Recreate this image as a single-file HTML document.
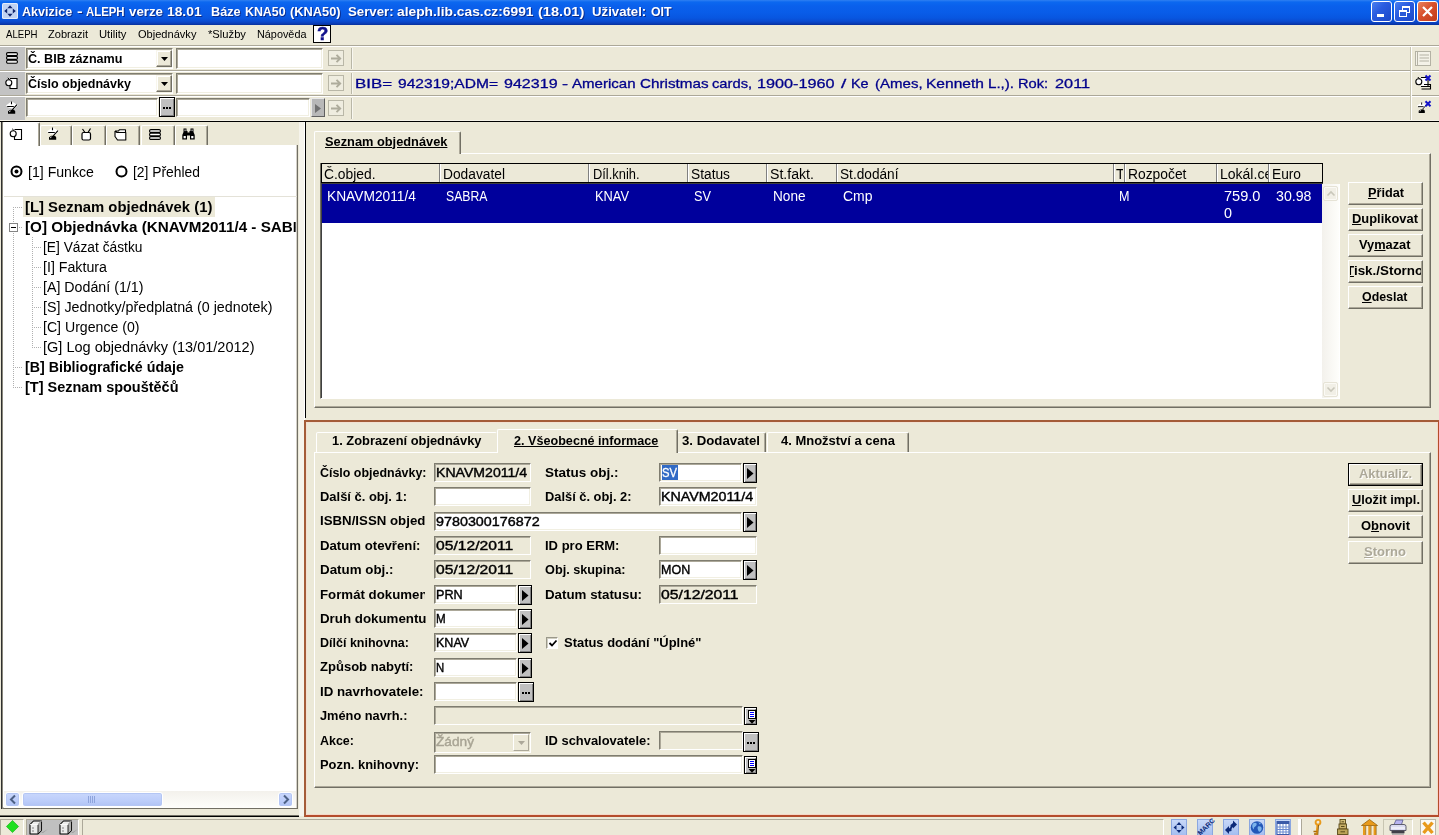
<!DOCTYPE html>
<html>
<head>
<meta charset="utf-8">
<title>Akvizice - ALEPH</title>
<style>
html,body{margin:0;padding:0;}
body{width:1439px;height:835px;overflow:hidden;background:#ece9d8;font-family:"Liberation Sans",sans-serif;font-size:13px;color:#000;position:relative;}
.a{position:absolute;box-sizing:border-box;}
.t{position:absolute;white-space:nowrap;line-height:16px;height:16px;transform:scaleX(1.0005);transform-origin:0 50%;}
#title{left:0;top:0;width:1439px;height:25px;background:linear-gradient(to bottom,#2f80f2 0,#0c68f0 2px,#0a60ec 6px,#095ce8 13px,#0856e0 18px,#0a4cd2 21px,#0a40be 23px,#08309c 25px);}
.cb{position:absolute;top:1px;width:21px;height:21px;border:1px solid #fff;border-radius:3px;box-sizing:border-box;background:linear-gradient(135deg,#4a80f0 0,#2a5ce0 40%,#1c48c8 100%);}
.cb.x{background:linear-gradient(135deg,#e8825c 0,#d8502c 45%,#c03c1c 100%);}
.in{position:absolute;box-sizing:border-box;background:#fff;border:1px solid;border-color:#7f7d70 #fff #fff #7f7d70;box-shadow:inset 1px 1px 0 #aca899, inset -1px -1px 0 #f1efe2;}
.in.ro{background:#ece9d8;box-shadow:inset 1px 1px 0 #aca899;}
.btn{position:absolute;box-sizing:border-box;background:#ece9d8;border:1px solid;border-color:#fff #716f64 #716f64 #fff;box-shadow:inset -1px -1px 0 #aca899;}
.gb{position:absolute;box-sizing:border-box;background:#c0c0c0;border:1px solid;border-color:#fff #404040 #404040 #fff;box-shadow:inset -1px -1px 0 #808080;}
.dd{position:absolute;box-sizing:border-box;background:#ece9d8;border:1px solid;border-color:#f8f6ec #716f64 #716f64 #f8f6ec;box-shadow:inset -1px -1px 0 #aca899, inset 1px 1px 0 #fff;}
svg{position:absolute;overflow:visible;}
</style>
</head>
<body>
<div class="a" id="title">
<svg style="left:2px;top:3px" width="16" height="16" viewBox="0 0 16 16"><rect x="0" y="0" width="16" height="16" rx="1.5" fill="#e4ecfa"/><rect x="1" y="1" width="14" height="14" rx="1" fill="#c0d2f2"/><path d="M8 2.2L10.6 5.2H5.4Z M8 13.8L10.6 10.8H5.4Z M2.2 8L5.2 5.4V10.6Z M13.8 8L10.8 5.4V10.6Z" fill="#10246c"/></svg>
<div class="t" style="left:21.7px;top:4.1px;font-size:13.7px;font-weight:bold;color:#fff;transform:scaleX(0.917);transform-origin:0 50%;text-shadow:1px 1px 0 #0a2a8a;">Akvizice</div>
<div class="t" style="left:77px;top:4.1px;font-size:13.7px;font-weight:bold;color:#fff;transform:scaleX(1.227);transform-origin:0 50%;text-shadow:1px 1px 0 #0a2a8a;">-</div>
<div class="t" style="left:85.7px;top:4.1px;font-size:13.7px;font-weight:bold;color:#fff;transform:scaleX(0.832);transform-origin:0 50%;text-shadow:1px 1px 0 #0a2a8a;">ALEPH</div>
<div class="t" style="left:129px;top:4.1px;font-size:13.7px;font-weight:bold;color:#fff;transform:scaleX(0.971);transform-origin:0 50%;text-shadow:1px 1px 0 #0a2a8a;">verze</div>
<div class="t" style="left:167.4px;top:4.1px;font-size:13.7px;font-weight:bold;color:#fff;transform:scaleX(1.009);transform-origin:0 50%;text-shadow:1px 1px 0 #0a2a8a;">18.01</div>
<div class="t" style="left:211.4px;top:4.1px;font-size:13.7px;font-weight:bold;color:#fff;transform:scaleX(0.926);transform-origin:0 50%;text-shadow:1px 1px 0 #0a2a8a;">Báze</div>
<div class="t" style="left:244.7px;top:4.1px;font-size:13.7px;font-weight:bold;color:#fff;transform:scaleX(0.904);transform-origin:0 50%;text-shadow:1px 1px 0 #0a2a8a;">KNA50</div>
<div class="t" style="left:289.7px;top:4.1px;font-size:13.7px;font-weight:bold;color:#fff;transform:scaleX(0.937);transform-origin:0 50%;text-shadow:1px 1px 0 #0a2a8a;">(KNA50)</div>
<div class="t" style="left:348px;top:4.1px;font-size:13.7px;font-weight:bold;color:#fff;transform:scaleX(0.966);transform-origin:0 50%;text-shadow:1px 1px 0 #0a2a8a;">Server:</div>
<div class="t" style="left:397px;top:4.1px;font-size:13.7px;font-weight:bold;color:#fff;transform:scaleX(1.008);transform-origin:0 50%;text-shadow:1px 1px 0 #0a2a8a;">aleph.lib.cas.cz:6991</div>
<div class="t" style="left:538px;top:4.1px;font-size:13.7px;font-weight:bold;color:#fff;transform:scaleX(1.067);transform-origin:0 50%;text-shadow:1px 1px 0 #0a2a8a;">(18.01)</div>
<div class="t" style="left:592px;top:4.1px;font-size:13.7px;font-weight:bold;color:#fff;transform:scaleX(0.964);transform-origin:0 50%;text-shadow:1px 1px 0 #0a2a8a;">Uživatel:</div>
<div class="t" style="left:651.4px;top:4.1px;font-size:13.7px;font-weight:bold;color:#fff;transform:scaleX(0.903);transform-origin:0 50%;text-shadow:1px 1px 0 #0a2a8a;">OIT</div>
<div class="cb" style="left:1371px"><div class="a" style="left:5px;top:12px;width:7px;height:3px;background:#fff"></div></div>
<div class="cb" style="left:1394px"><div class="a" style="left:7px;top:4px;width:8px;height:7px;border:1px solid #fff;border-top-width:2px"></div><div class="a" style="left:4px;top:8px;width:8px;height:7px;border:1px solid #fff;border-top-width:2px;background:#2a5ad8"></div></div>
<div class="cb x" style="left:1417px"><svg style="left:0;top:0" width="19" height="19" viewBox="0 0 19 19"><path d="M5 5 L14 14 M14 5 L5 14" stroke="#fff" stroke-width="2.2" fill="none"/></svg></div>
</div>
<div class="t" style="left:5.5px;top:25.8px;font-size:11px;transform:scaleX(0.873);transform-origin:0 50%;">ALEPH</div>
<div class="t" style="left:48px;top:25.8px;font-size:11px;transform:scaleX(1.006);transform-origin:0 50%;">Zobrazit</div>
<div class="t" style="left:99px;top:25.8px;font-size:11px;transform:scaleX(1.022);transform-origin:0 50%;">Utility</div>
<div class="t" style="left:138px;top:25.8px;font-size:11px;transform:scaleX(1.006);transform-origin:0 50%;">Objednávky</div>
<div class="t" style="left:207.5px;top:25.8px;font-size:11px;transform:scaleX(1.018);transform-origin:0 50%;">*Služby</div>
<div class="t" style="left:257px;top:25.8px;font-size:11px;transform:scaleX(0.986);transform-origin:0 50%;">Nápověda</div>
<div class="a" style="left:313px;top:25px;width:18px;height:18px;border:1px solid #000;background:#fff;"></div>
<div class="t" style="left:316.5px;top:25.2px;line-height:18px;height:18px;font-size:18.5px;font-weight:bold;color:#10108c;-webkit-text-stroke:0.5px #10108c;">?</div>
<div class="a" style="left:0px;top:45px;width:1439px;height:1px;background:#aca899"></div>
<div class="a" style="left:0px;top:46px;width:1439px;height:1px;background:#fff"></div>
<div class="a" style="left:0px;top:70px;width:1439px;height:1px;background:#aca899"></div>
<div class="a" style="left:0px;top:71px;width:1439px;height:1px;background:#fff"></div>
<div class="a" style="left:0px;top:95px;width:1439px;height:1px;background:#aca899"></div>
<div class="a" style="left:0px;top:96px;width:1439px;height:1px;background:#fff"></div>
<div class="a" style="left:0px;top:120px;width:1439px;height:1px;background:#f4f2e8"></div>
<div class="a" style="left:0px;top:121px;width:1439px;height:1px;background:#000"></div>
<div class="a" style="left:0px;top:47px;width:25px;height:23px;background:#c3c3c3"></div>
<div class="a" style="left:0px;top:72px;width:25px;height:23px;background:#c3c3c3"></div>
<div class="a" style="left:0px;top:97px;width:25px;height:23px;background:#c3c3c3"></div>
<div class="in" style="left:26px;top:48px;width:147px;height:21px;"></div>
<div class="t" style="left:28px;top:50.5px;font-weight:bold;transform:scaleX(0.969);transform-origin:0 50%;">Č. BIB záznamu</div>
<div class="dd" style="left:156px;top:50px;width:16px;height:17px;"><svg style="left:4px;top:6px" width="7" height="4" viewBox="0 0 7 4"><path d="M0 0H7L3.5 4Z" fill="#000"/></svg></div>
<div class="in" style="left:176px;top:48px;width:147px;height:21px;"></div>
<div class="in" style="left:26px;top:73px;width:147px;height:21px;"></div>
<div class="t" style="left:28px;top:75.5px;font-weight:bold;transform:scaleX(0.963);transform-origin:0 50%;">Číslo objednávky</div>
<div class="dd" style="left:156px;top:75px;width:16px;height:17px;"><svg style="left:4px;top:6px" width="7" height="4" viewBox="0 0 7 4"><path d="M0 0H7L3.5 4Z" fill="#000"/></svg></div>
<div class="in" style="left:176px;top:73px;width:147px;height:21px;"></div>
<div class="in" style="left:26px;top:98px;width:132px;height:19px;"></div>
<div class="a" style="left:159px;top:97px;width:16px;height:20px;background:#c0c0c0;border:1px solid #000;box-shadow:inset 1px 1px 0 #fff, inset -1px -1px 0 #808080;"></div>
<div class="a" style="left:163px;top:107px;width:2px;height:2px;background:#000"></div>
<div class="a" style="left:166px;top:107px;width:2px;height:2px;background:#000"></div>
<div class="a" style="left:169px;top:107px;width:2px;height:2px;background:#000"></div>
<div class="in" style="left:176px;top:98px;width:134px;height:19px;"></div>
<div class="a" style="left:311px;top:98px;width:14px;height:19px;background:#b8b8b8;border:1px solid;border-color:#e8e8e8 #606060 #606060 #e8e8e8;"><svg style="left:3px;top:5px" width="6" height="9" viewBox="0 0 6 9"><path d="M0 0L6 4.5L0 9Z" fill="#707070"/></svg></div>
<div class="a" style="left:328px;top:50px;width:16px;height:16px;border:1px solid #b9b7a7;background:#efede0;"><svg style="left:2px;top:2.5px" width="11" height="9" viewBox="0 0 11 9"><path d="M0 4.5H9M5.5 0.8L9.2 4.5L5.5 8.2" stroke="#aeac9c" stroke-width="1.9" fill="none"/></svg></div>
<div class="a" style="left:351px;top:48px;width:1px;height:21px;background:#b9b7a7"></div>
<div class="a" style="left:352px;top:48px;width:1px;height:21px;background:#f8f7f0"></div>
<div class="a" style="left:328px;top:75px;width:16px;height:16px;border:1px solid #b9b7a7;background:#efede0;"><svg style="left:2px;top:2.5px" width="11" height="9" viewBox="0 0 11 9"><path d="M0 4.5H9M5.5 0.8L9.2 4.5L5.5 8.2" stroke="#aeac9c" stroke-width="1.9" fill="none"/></svg></div>
<div class="a" style="left:351px;top:73px;width:1px;height:21px;background:#b9b7a7"></div>
<div class="a" style="left:352px;top:73px;width:1px;height:21px;background:#f8f7f0"></div>
<div class="a" style="left:328px;top:100px;width:16px;height:16px;border:1px solid #b9b7a7;background:#efede0;"><svg style="left:2px;top:2.5px" width="11" height="9" viewBox="0 0 11 9"><path d="M0 4.5H9M5.5 0.8L9.2 4.5L5.5 8.2" stroke="#aeac9c" stroke-width="1.9" fill="none"/></svg></div>
<div class="a" style="left:351px;top:98px;width:1px;height:21px;background:#b9b7a7"></div>
<div class="a" style="left:352px;top:98px;width:1px;height:21px;background:#f8f7f0"></div>
<div class="t" style="left:355.2px;top:75.5px;color:#00008b;transform:scaleX(1.299);transform-origin:0 50%;-webkit-text-stroke:0.3px #00008b;">BIB=</div>
<div class="t" style="left:397.7px;top:75.5px;color:#00008b;transform:scaleX(1.198);transform-origin:0 50%;-webkit-text-stroke:0.3px #00008b;">942319;ADM=</div>
<div class="t" style="left:503.7px;top:75.5px;color:#00008b;transform:scaleX(1.235);transform-origin:0 50%;-webkit-text-stroke:0.3px #00008b;">942319</div>
<div class="t" style="left:561.7px;top:75.5px;color:#00008b;transform:scaleX(1.404);transform-origin:0 50%;-webkit-text-stroke:0.3px #00008b;">-</div>
<div class="t" style="left:571.7px;top:75.5px;color:#00008b;transform:scaleX(1.157);transform-origin:0 50%;-webkit-text-stroke:0.3px #00008b;">American</div>
<div class="t" style="left:639.7px;top:75.5px;color:#00008b;transform:scaleX(1.172);transform-origin:0 50%;-webkit-text-stroke:0.3px #00008b;">Christmas</div>
<div class="t" style="left:712.2px;top:75.5px;color:#00008b;transform:scaleX(1.132);transform-origin:0 50%;-webkit-text-stroke:0.3px #00008b;">cards,</div>
<div class="t" style="left:757.2px;top:75.5px;color:#00008b;transform:scaleX(1.248);transform-origin:0 50%;-webkit-text-stroke:0.3px #00008b;">1900-1960</div>
<div class="t" style="left:840.5px;top:75.5px;color:#00008b;transform:scaleX(1.461);transform-origin:0 50%;-webkit-text-stroke:0.3px #00008b;">/</div>
<div class="t" style="left:851.2px;top:75.5px;color:#00008b;transform:scaleX(1.106);transform-origin:0 50%;-webkit-text-stroke:0.3px #00008b;">Ke</div>
<div class="t" style="left:874.7px;top:75.5px;color:#00008b;transform:scaleX(1.156);transform-origin:0 50%;-webkit-text-stroke:0.3px #00008b;">(Ames,</div>
<div class="t" style="left:925.7px;top:75.5px;color:#00008b;transform:scaleX(1.195);transform-origin:0 50%;-webkit-text-stroke:0.3px #00008b;">Kenneth</div>
<div class="t" style="left:987.7px;top:75.5px;color:#00008b;transform:scaleX(1.164);transform-origin:0 50%;-webkit-text-stroke:0.3px #00008b;">L.,).</div>
<div class="t" style="left:1017.7px;top:75.5px;color:#00008b;transform:scaleX(1.125);transform-origin:0 50%;-webkit-text-stroke:0.3px #00008b;">Rok:</div>
<div class="t" style="left:1054.7px;top:75.5px;color:#00008b;transform:scaleX(1.254);transform-origin:0 50%;-webkit-text-stroke:0.3px #00008b;">2011</div>
<div class="a" style="left:1410px;top:47px;width:1px;height:73px;background:#c8c5b2"></div>
<div class="a" style="left:1411px;top:47px;width:1px;height:73px;background:#fff"></div>
<div class="a" style="left:1px;top:122px;width:1px;height:687px;background:#303030"></div>
<div class="a" style="left:2px;top:122px;width:1px;height:687px;background:#8a887c"></div>
<div class="a" style="left:40px;top:125px;width:32px;height:20px;background:#ece9d8;border-top:1px solid #fff;border-left:1px solid #fff;border-right:1px solid #716f64;box-shadow:inset -1px 0 0 #aca899;border-radius:2px 2px 0 0;"></div>
<div class="a" style="left:72px;top:125px;width:34px;height:20px;background:#ece9d8;border-top:1px solid #fff;border-left:1px solid #fff;border-right:1px solid #716f64;box-shadow:inset -1px 0 0 #aca899;border-radius:2px 2px 0 0;"></div>
<div class="a" style="left:106px;top:125px;width:34px;height:20px;background:#ece9d8;border-top:1px solid #fff;border-left:1px solid #fff;border-right:1px solid #716f64;box-shadow:inset -1px 0 0 #aca899;border-radius:2px 2px 0 0;"></div>
<div class="a" style="left:140.5px;top:125px;width:34px;height:20px;background:#ece9d8;border-top:1px solid #fff;border-left:1px solid #fff;border-right:1px solid #716f64;box-shadow:inset -1px 0 0 #aca899;border-radius:2px 2px 0 0;"></div>
<div class="a" style="left:175px;top:125px;width:33px;height:20px;background:#ece9d8;border-top:1px solid #fff;border-left:1px solid #fff;border-right:1px solid #716f64;box-shadow:inset -1px 0 0 #aca899;border-radius:2px 2px 0 0;"></div>
<div class="a" style="left:3px;top:145px;width:295px;height:664px;background:#fff;border-right:1px solid #716f64;border-bottom:1px solid #716f64;box-shadow:inset -1px -1px 0 #d4d0c8;"></div>
<div class="a" style="left:3px;top:122px;width:37px;height:24px;background:#fff;border-top:1px solid #fff;border-right:1px solid #716f64;box-shadow:inset -1px 0 0 #aca899;border-radius:2px 2px 0 0;"></div>
<svg style="left:9px;top:128px" width="14" height="13" viewBox="0 0 14 13"><path d="M5.5 1.5H12.5V11.5H5.5V8" fill="#fff" stroke="#000" stroke-width="1.1"/><circle cx="4.2" cy="5.8" r="3" fill="#fff" stroke="#000" stroke-width="1.1"/><path d="M3.2 0.8L5 2.6" stroke="#000" stroke-width="1"/></svg>
<svg style="left:47px;top:127px" width="12" height="13" viewBox="0 0 12 13"><path d="M0 4.5L5.5 0.3L12 4.3L8 8L2.5 6.5Z" fill="#fff"/><path d="M5.5 0.5V3.2M1.2 5.5H7.8M11 3.6L6.2 8.8" stroke="#000" stroke-width="1.1" fill="none"/><path d="M2 12.8V10.2L4.5 8.8H8L9.2 10.2V12.8Z" fill="#000"/><path d="M3.2 10.8L4.6 9.9" stroke="#fff" stroke-width="0.9"/></svg>
<svg style="left:81px;top:128px" width="11" height="13" viewBox="0 0 11 13"><rect x="1" y="4.5" width="8.5" height="7.5" rx="1.5" fill="#fff" stroke="#000" stroke-width="1.2"/><path d="M1.5 1L4 4.5M9.5 0.5L7 4.5" stroke="#000" stroke-width="1.2" fill="none"/></svg>
<svg style="left:114px;top:129px" width="13" height="12" viewBox="0 0 13 12"><path d="M1 2H4.5L5.5 0.7H11.5V3.5M1 2V7.5L3.5 11H11.8V3.5H3L1 2" fill="#fff" stroke="#000" stroke-width="1.1" stroke-linejoin="round"/></svg>
<svg style="left:149px;top:129px" width="12" height="11" viewBox="0 0 12 11"><rect x="0.6" y="0.6" width="10.8" height="2.8" rx="1.2" fill="#fff" stroke="#000" stroke-width="1.1"/><rect x="0.6" y="4.1" width="10.8" height="2.8" rx="1.2" fill="#fff" stroke="#000" stroke-width="1.1"/><rect x="0.6" y="7.6" width="10.8" height="2.8" rx="1.2" fill="#fff" stroke="#000" stroke-width="1.1"/></svg>
<svg style="left:182px;top:128px" width="13" height="12" viewBox="0 0 13 12"><path d="M1.5 0.5H4.5V3H5.5V4.5H7.5V3H8.5V0.5H11.5V4L12.7 7V11.5H8V7.5H5V11.5H0.3V7L1.5 4Z" fill="#000"/><rect x="1.6" y="8" width="2.2" height="2.3" fill="#fff"/><rect x="9.2" y="8" width="2.2" height="2.3" fill="#fff"/><rect x="2.6" y="1.5" width="0.9" height="1.6" fill="#fff"/><rect x="9.6" y="1.5" width="0.9" height="1.6" fill="#fff"/></svg>
<svg style="left:10px;top:165px" width="13" height="13" viewBox="0 0 13 13"><circle cx="6.5" cy="6.5" r="5" fill="#fff" stroke="#000" stroke-width="2"/><circle cx="6.5" cy="6.5" r="2" fill="#000"/></svg>
<svg style="left:114.5px;top:165px" width="13" height="13" viewBox="0 0 13 13"><circle cx="6.5" cy="6.5" r="5" fill="#fff" stroke="#000" stroke-width="2"/></svg>
<div class="t" style="left:27.5px;top:164px;font-size:14px;transform:scaleX(1.009);transform-origin:0 50%;">[1] Funkce</div>
<div class="t" style="left:132.5px;top:164px;font-size:14px;transform:scaleX(0.989);transform-origin:0 50%;">[2] Přehled</div>
<div class="a" style="left:4px;top:196px;width:293px;height:1px;background:#e4e2d8"></div>
<div class="a" style="left:13px;top:207px;width:1px;height:181px;background-image:linear-gradient(to bottom,#b0b0b0 50%,transparent 50%);background-size:1px 2px;"></div>
<div class="a" style="left:13px;top:207px;width:10px;height:1px;background-image:linear-gradient(to right,#b0b0b0 50%,transparent 50%);background-size:2px 1px;"></div>
<div class="a" style="left:13px;top:227px;width:10px;height:1px;background-image:linear-gradient(to right,#b0b0b0 50%,transparent 50%);background-size:2px 1px;"></div>
<div class="a" style="left:13px;top:367px;width:10px;height:1px;background-image:linear-gradient(to right,#b0b0b0 50%,transparent 50%);background-size:2px 1px;"></div>
<div class="a" style="left:13px;top:387px;width:10px;height:1px;background-image:linear-gradient(to right,#b0b0b0 50%,transparent 50%);background-size:2px 1px;"></div>
<div class="a" style="left:32px;top:237px;width:1px;height:111px;background-image:linear-gradient(to bottom,#b0b0b0 50%,transparent 50%);background-size:1px 2px;"></div>
<div class="a" style="left:32px;top:247px;width:10px;height:1px;background-image:linear-gradient(to right,#b0b0b0 50%,transparent 50%);background-size:2px 1px;"></div>
<div class="a" style="left:32px;top:267px;width:10px;height:1px;background-image:linear-gradient(to right,#b0b0b0 50%,transparent 50%);background-size:2px 1px;"></div>
<div class="a" style="left:32px;top:287px;width:10px;height:1px;background-image:linear-gradient(to right,#b0b0b0 50%,transparent 50%);background-size:2px 1px;"></div>
<div class="a" style="left:32px;top:307px;width:10px;height:1px;background-image:linear-gradient(to right,#b0b0b0 50%,transparent 50%);background-size:2px 1px;"></div>
<div class="a" style="left:32px;top:327px;width:10px;height:1px;background-image:linear-gradient(to right,#b0b0b0 50%,transparent 50%);background-size:2px 1px;"></div>
<div class="a" style="left:32px;top:347px;width:10px;height:1px;background-image:linear-gradient(to right,#b0b0b0 50%,transparent 50%);background-size:2px 1px;"></div>
<div class="a" style="left:9px;top:223px;width:9px;height:9px;background:#fff;border:1px solid #848484;"></div>
<div class="a" style="left:11px;top:227px;width:5px;height:1px;background:#000"></div>
<div class="a" style="left:23px;top:197px;width:192px;height:20px;background:#ece9d8"></div>
<div class="t" style="left:25px;top:199px;font-size:14px;font-weight:bold;transform:scaleX(1.061);transform-origin:0 50%;">[L] Seznam objednávek (1)</div>
<div class="t" style="left:25px;top:219px;font-size:14px;font-weight:bold;width:249.3px;overflow:hidden;transform:scaleX(1.087);transform-origin:0 50%;">[O] Objednávka (KNAVM2011/4 - SABRA</div>
<div class="t" style="left:43px;top:239px;font-size:14px;transform:scaleX(0.983);transform-origin:0 50%;">[E] Vázat částku</div>
<div class="t" style="left:43px;top:259px;font-size:14px;transform:scaleX(1.015);transform-origin:0 50%;">[I] Faktura</div>
<div class="t" style="left:43px;top:279px;font-size:14px;transform:scaleX(1.016);transform-origin:0 50%;">[A] Dodání (1/1)</div>
<div class="t" style="left:43px;top:299px;font-size:14px;transform:scaleX(1.020);transform-origin:0 50%;">[S] Jednotky/předplatná (0 jednotek)</div>
<div class="t" style="left:43px;top:319px;font-size:14px;transform:scaleX(1.008);transform-origin:0 50%;">[C] Urgence (0)</div>
<div class="t" style="left:43px;top:339px;font-size:14px;transform:scaleX(1.037);transform-origin:0 50%;">[G] Log objednávky (13/01/2012)</div>
<div class="t" style="left:25px;top:359px;font-size:14px;font-weight:bold;transform:scaleX(1.016);transform-origin:0 50%;">[B] Bibliografické údaje</div>
<div class="t" style="left:25px;top:379px;font-size:14px;font-weight:bold;transform:scaleX(1.033);transform-origin:0 50%;">[T] Seznam spouštěčů</div>
<div class="a" style="left:4px;top:791px;width:292px;height:17px;background:linear-gradient(to bottom,#f3f1ec,#fefefb)"></div>
<div class="a" style="left:5px;top:792px;width:15px;height:15px;background:linear-gradient(to bottom,#c9d7fc,#bccdfa 60%,#b0c3f4);border:1px solid #fff;border-radius:3px;box-shadow:inset 0 0 0 1px #b4c6f4;"><svg style="left:3px;top:2px" width="8" height="9" viewBox="0 0 8 9"><path d="M6 0.5L2 4.5L6 8.5" stroke="#4d6185" stroke-width="2" fill="none"/></svg></div>
<div class="a" style="left:278px;top:792px;width:15px;height:15px;background:linear-gradient(to bottom,#c9d7fc,#bccdfa 60%,#b0c3f4);border:1px solid #fff;border-radius:3px;box-shadow:inset 0 0 0 1px #b4c6f4;"><svg style="left:3px;top:2px" width="8" height="9" viewBox="0 0 8 9"><path d="M2 0.5L6 4.5L2 8.5" stroke="#4d6185" stroke-width="2" fill="none"/></svg></div>
<div class="a" style="left:22px;top:792px;width:141px;height:15px;background:linear-gradient(to bottom,#c9d7fc,#bccdfa 60%,#b0c3f4);border:1px solid #fff;border-radius:3px;box-shadow:inset 0 0 0 1px #b4c6f4;"></div>
<div class="a" style="left:88px;top:796px;width:1px;height:7px;background:#8ea4dc"></div>
<div class="a" style="left:90px;top:796px;width:1px;height:7px;background:#8ea4dc"></div>
<div class="a" style="left:92px;top:796px;width:1px;height:7px;background:#8ea4dc"></div>
<div class="a" style="left:94px;top:796px;width:1px;height:7px;background:#8ea4dc"></div>
<div class="a" style="left:299px;top:122px;width:6px;height:694px;background:#f6f4ec"></div>
<div class="a" style="left:304px;top:122px;width:1px;height:694px;background:#fff"></div>
<div class="a" style="left:305px;top:122px;width:1px;height:296px;background:#000"></div>
<div class="a" style="left:314px;top:153px;width:1117px;height:255px;border:1px solid;border-color:#fff #716f64 #716f64 #fff;box-shadow:inset -1px -1px 0 #aca899;"></div>
<div class="a" style="left:314px;top:131px;width:147px;height:23px;background:#ece9d8;border:1px solid;border-color:#fff #716f64 transparent #fff;border-bottom:none;box-shadow:inset -1px 0 0 #aca899;border-radius:2px 2px 0 0;"></div>
<div class="t" style="left:325px;top:133.5px;font-weight:bold;transform:scaleX(0.985);transform-origin:0 50%;text-decoration:underline;">Seznam objednávek</div>
<div class="a" style="left:320px;top:163px;width:1020px;height:236px;background:#fff;border:1px solid;border-color:#716f64 #fff #fff #716f64;box-shadow:inset 1px 1px 0 #404040;"></div>
<div class="a" style="left:1323px;top:162px;width:18px;height:22px;background:#ece9d8;"></div>
<div class="a" style="left:1323px;top:184px;width:16px;height:1px;background:#aca899"></div>
<div class="a" style="left:321px;top:163px;width:1002px;height:20px;background:#ece9d8;border:1px solid #000;"></div>
<div class="a" style="left:322px;top:183px;width:1001px;height:1px;background:#404040"></div>
<div class="a" style="left:438.5px;top:164px;width:1px;height:18px;background:#808080"></div>
<div class="a" style="left:439.5px;top:164px;width:1px;height:18px;background:#fff"></div>
<div class="a" style="left:587.5px;top:164px;width:1px;height:18px;background:#808080"></div>
<div class="a" style="left:588.5px;top:164px;width:1px;height:18px;background:#fff"></div>
<div class="a" style="left:686.5px;top:164px;width:1px;height:18px;background:#808080"></div>
<div class="a" style="left:687.5px;top:164px;width:1px;height:18px;background:#fff"></div>
<div class="a" style="left:765.5px;top:164px;width:1px;height:18px;background:#808080"></div>
<div class="a" style="left:766.5px;top:164px;width:1px;height:18px;background:#fff"></div>
<div class="a" style="left:835.5px;top:164px;width:1px;height:18px;background:#808080"></div>
<div class="a" style="left:836.5px;top:164px;width:1px;height:18px;background:#fff"></div>
<div class="a" style="left:1112.5px;top:164px;width:1px;height:18px;background:#808080"></div>
<div class="a" style="left:1113.5px;top:164px;width:1px;height:18px;background:#fff"></div>
<div class="a" style="left:1123.5px;top:164px;width:1px;height:18px;background:#808080"></div>
<div class="a" style="left:1124.5px;top:164px;width:1px;height:18px;background:#fff"></div>
<div class="a" style="left:1215.5px;top:164px;width:1px;height:18px;background:#808080"></div>
<div class="a" style="left:1216.5px;top:164px;width:1px;height:18px;background:#fff"></div>
<div class="a" style="left:1267.5px;top:164px;width:1px;height:18px;background:#808080"></div>
<div class="a" style="left:1268.5px;top:164px;width:1px;height:18px;background:#fff"></div>
<div class="t" style="left:324px;top:166px;font-size:14px;transform:scaleX(0.987);transform-origin:0 50%;">Č.objed.</div>
<div class="t" style="left:443px;top:166px;font-size:14px;transform:scaleX(0.983);transform-origin:0 50%;">Dodavatel</div>
<div class="t" style="left:592.5px;top:166px;font-size:14px;transform:scaleX(0.919);transform-origin:0 50%;">Díl.knih.</div>
<div class="t" style="left:691px;top:166px;font-size:14px;transform:scaleX(0.982);transform-origin:0 50%;">Status</div>
<div class="t" style="left:770px;top:166px;font-size:14px;transform:scaleX(1.009);transform-origin:0 50%;">St.fakt.</div>
<div class="t" style="left:840px;top:166px;font-size:14px;transform:scaleX(0.976);transform-origin:0 50%;">St.dodání</div>
<div class="t" style="left:1127.5px;top:166px;font-size:14px;transform:scaleX(0.988);transform-origin:0 50%;">Rozpočet</div>
<div class="t" style="left:1272px;top:166px;font-size:14px;transform:scaleX(0.980);transform-origin:0 50%;">Euro</div>
<div class="t" style="left:1116px;top:166px;font-size:14px;width:7px;overflow:hidden;">T</div>
<div class="t" style="left:1219.5px;top:166px;font-size:14px;width:47.5px;overflow:hidden;">Lokál.ce</div>
<div class="a" style="left:322px;top:184px;width:1000px;height:39px;background:#00009c"></div>
<div class="t" style="left:326.5px;top:188px;font-size:14px;color:#fff;transform:scaleX(0.983);transform-origin:0 50%;">KNAVM2011/4</div>
<div class="t" style="left:446px;top:188px;font-size:14px;color:#fff;transform:scaleX(0.874);transform-origin:0 50%;">SABRA</div>
<div class="t" style="left:594.5px;top:188px;font-size:14px;color:#fff;transform:scaleX(0.916);transform-origin:0 50%;">KNAV</div>
<div class="t" style="left:693.5px;top:188px;font-size:14px;color:#fff;transform:scaleX(0.909);transform-origin:0 50%;">SV</div>
<div class="t" style="left:773px;top:188px;font-size:14px;color:#fff;transform:scaleX(0.971);transform-origin:0 50%;">None</div>
<div class="t" style="left:843px;top:188px;font-size:14px;color:#fff;transform:scaleX(0.997);transform-origin:0 50%;">Cmp</div>
<div class="t" style="left:1119px;top:188px;font-size:14px;color:#fff;transform:scaleX(0.899);transform-origin:0 50%;">M</div>
<div class="t" style="left:1223.5px;top:188px;font-size:14px;color:#fff;transform:scaleX(1.041);transform-origin:0 50%;">759.0</div>
<div class="t" style="left:1276px;top:188px;font-size:14px;color:#fff;transform:scaleX(1.012);transform-origin:0 50%;">30.98</div>
<div class="t" style="left:1223.5px;top:205px;font-size:14px;color:#fff;transform:scaleX(1.026);transform-origin:0 50%;">0</div>
<div class="a" style="left:1322px;top:184px;width:17px;height:214px;background:linear-gradient(to right,#f3f1ec,#fefefb)"></div>
<div class="a" style="left:1323px;top:186px;width:15px;height:15px;background:#f1efe6;border:1px solid #e6e3d6;border-radius:2px;box-shadow:inset 0 0 0 1px #fbfaf5;"><svg style="left:2.5px;top:4px" width="8" height="5" viewBox="0 0 8 5"><path d="M0.5 4.5L4 1L7.5 4.5" stroke="#c9c7ba" stroke-width="1.6" fill="none"/></svg></div>
<div class="a" style="left:1323px;top:382px;width:15px;height:15px;background:#f1efe6;border:1px solid #e6e3d6;border-radius:2px;box-shadow:inset 0 0 0 1px #fbfaf5;"><svg style="left:2.5px;top:4px" width="8" height="5" viewBox="0 0 8 5"><path d="M0.5 0.5L4 4L7.5 0.5" stroke="#c9c7ba" stroke-width="1.6" fill="none"/></svg></div>
<div class="btn" style="left:1348px;top:182px;width:75px;height:23px;"></div>
<div class="t" style="left:1367.5px;top:184.5px;font-weight:bold;transform:scaleX(0.977);transform-origin:0 50%;"><u>P</u>řidat</div>
<div class="btn" style="left:1348px;top:208px;width:75px;height:23px;"></div>
<div class="t" style="left:1352px;top:210.5px;font-weight:bold;transform:scaleX(0.992);transform-origin:0 50%;"><u>D</u>uplikovat</div>
<div class="btn" style="left:1348px;top:234px;width:75px;height:23px;"></div>
<div class="t" style="left:1359px;top:236.5px;font-weight:bold;transform:scaleX(0.985);transform-origin:0 50%;">Vy<u>m</u>azat</div>
<div class="btn" style="left:1348px;top:260px;width:75px;height:23px;"></div>
<div class="btn" style="left:1348px;top:286px;width:75px;height:23px;"></div>
<div class="t" style="left:1361.5px;top:288.5px;font-weight:bold;transform:scaleX(0.953);transform-origin:0 50%;"><u>O</u>deslat</div>
<div class="a" style="left:1350px;top:261px;width:71px;height:20px;overflow:hidden;"><div class="t" style="left:-4px;top:1.5px;font-weight:bold;transform:scaleX(1.03);transform-origin:0 50%;"><u>T</u>isk./Storno</div></div>
<div class="a" style="left:304px;top:420px;width:1136px;height:397px;border:2px solid #a45c38;border-right-color:#b44c2c;border-bottom-color:#b44c2c;box-shadow:inset 1px 1px 0 #f2e0d2, inset -1px -1px 0 #f4d8c8;"></div>
<div class="a" style="left:314px;top:452px;width:1117px;height:336px;border:1px solid;border-color:#fff #716f64 #716f64 #fff;box-shadow:inset -1px -1px 0 #aca899;"></div>
<div class="a" style="left:316px;top:432px;width:181px;height:20px;background:#ece9d8;border:1px solid;border-color:#fff transparent transparent #fff;border-bottom:none;border-radius:2px 2px 0 0;"></div>
<div class="a" style="left:677px;top:432px;width:89px;height:20px;background:#ece9d8;border:1px solid;border-color:#fff #716f64 transparent #fff;border-bottom:none;box-shadow:inset -1px 0 0 #aca899;border-radius:2px 2px 0 0;"></div>
<div class="a" style="left:767px;top:432px;width:142px;height:20px;background:#ece9d8;border:1px solid;border-color:#fff #716f64 transparent #fff;border-bottom:none;box-shadow:inset -1px 0 0 #aca899;border-radius:2px 2px 0 0;"></div>
<div class="a" style="left:497px;top:429px;width:181px;height:24px;background:#ece9d8;border:1px solid;border-color:#fff #716f64 transparent #fff;border-bottom:none;box-shadow:inset -1px 0 0 #aca899;border-radius:2px 2px 0 0;"></div>
<div class="t" style="left:332px;top:432.5px;font-weight:bold;transform:scaleX(0.990);transform-origin:0 50%;">1. Zobrazení objednávky</div>
<div class="t" style="left:514px;top:433px;font-weight:bold;transform:scaleX(0.970);transform-origin:0 50%;text-decoration:underline;">2. Všeobecné informace</div>
<div class="t" style="left:681.5px;top:432.5px;font-weight:bold;transform:scaleX(1.018);transform-origin:0 50%;">3. Dodavatel</div>
<div class="t" style="left:780.5px;top:432.5px;font-weight:bold;transform:scaleX(0.998);transform-origin:0 50%;">4. Množství a cena</div>
<div class="t" style="left:320px;top:464.5px;font-weight:bold;transform:scaleX(0.957);transform-origin:0 50%;">Číslo objednávky:</div>
<div class="t" style="left:320px;top:488.5px;font-weight:bold;transform:scaleX(0.995);transform-origin:0 50%;">Další č. obj. 1:</div>
<div class="t" style="left:320px;top:513px;font-weight:bold;width:103.922px;overflow:hidden;transform:scaleX(1.02);transform-origin:0 50%;">ISBN/ISSN objedn</div>
<div class="t" style="left:320px;top:537.5px;font-weight:bold;transform:scaleX(1.015);transform-origin:0 50%;">Datum otevření:</div>
<div class="t" style="left:320px;top:561.5px;font-weight:bold;transform:scaleX(1.027);transform-origin:0 50%;">Datum obj.:</div>
<div class="t" style="left:320px;top:586.5px;font-weight:bold;width:102.941px;overflow:hidden;transform:scaleX(1.02);transform-origin:0 50%;">Formát dokumentu</div>
<div class="t" style="left:320px;top:610.5px;font-weight:bold;transform:scaleX(1.024);transform-origin:0 50%;">Druh dokumentu</div>
<div class="t" style="left:320px;top:634.5px;font-weight:bold;transform:scaleX(0.962);transform-origin:0 50%;">Dílčí knihovna:</div>
<div class="t" style="left:320px;top:659px;font-weight:bold;transform:scaleX(1.003);transform-origin:0 50%;">Způsob nabytí:</div>
<div class="t" style="left:320px;top:683.5px;font-weight:bold;transform:scaleX(1.023);transform-origin:0 50%;">ID navrhovatele:</div>
<div class="t" style="left:320px;top:707.5px;font-weight:bold;transform:scaleX(0.984);transform-origin:0 50%;">Jméno navrh.:</div>
<div class="t" style="left:320px;top:732.5px;font-weight:bold;transform:scaleX(0.959);transform-origin:0 50%;">Akce:</div>
<div class="t" style="left:320px;top:756.5px;font-weight:bold;transform:scaleX(0.993);transform-origin:0 50%;">Pozn. knihovny:</div>
<div class="t" style="left:545px;top:464.5px;font-weight:bold;transform:scaleX(1.038);transform-origin:0 50%;">Status obj.:</div>
<div class="t" style="left:545px;top:488.5px;font-weight:bold;transform:scaleX(0.989);transform-origin:0 50%;">Další č. obj. 2:</div>
<div class="t" style="left:545px;top:537.5px;font-weight:bold;transform:scaleX(1.001);transform-origin:0 50%;">ID pro ERM:</div>
<div class="t" style="left:545px;top:561.5px;font-weight:bold;transform:scaleX(0.977);transform-origin:0 50%;">Obj. skupina:</div>
<div class="t" style="left:545px;top:586.5px;font-weight:bold;transform:scaleX(1.025);transform-origin:0 50%;">Datum statusu:</div>
<div class="t" style="left:545px;top:732.5px;font-weight:bold;transform:scaleX(0.993);transform-origin:0 50%;">ID schvalovatele:</div>
<div class="in ro" style="left:434px;top:463px;width:97px;height:19px;"></div>
<div class="t" style="left:435.8px;top:464.8px;transform:scaleX(1.084);transform-origin:0 50%;-webkit-text-stroke:0.4px #000;">KNAVM2011/4</div>
<div class="in" style="left:434px;top:487px;width:97px;height:19px;"></div>
<div class="in" style="left:434px;top:512px;width:308px;height:19px;"></div>
<div class="t" style="left:435.8px;top:513.8px;transform:scaleX(1.103);transform-origin:0 50%;-webkit-text-stroke:0.4px #000;">9780300176872</div>
<div class="a" style="left:743px;top:512px;width:14px;height:20px;background:#c0c0c0;border:1px solid #000;box-shadow:inset 1px 1px 0 #fff, inset -1px -1px 0 #808080;"></div>
<svg style="left:747px;top:516.5px" width="7" height="11" viewBox="0 0 7 11"><path d="M0 0L6.5 5.5L0 11Z" fill="#000"/></svg>
<div class="in ro" style="left:434px;top:536px;width:97px;height:19px;"></div>
<div class="t" style="left:435.8px;top:537.8px;transform:scaleX(1.204);transform-origin:0 50%;-webkit-text-stroke:0.4px #000;">05/12/2011</div>
<div class="in ro" style="left:434px;top:560px;width:97px;height:19px;"></div>
<div class="t" style="left:435.8px;top:561.8px;transform:scaleX(1.204);transform-origin:0 50%;-webkit-text-stroke:0.4px #000;">05/12/2011</div>
<div class="in" style="left:434px;top:585px;width:83px;height:19px;"></div>
<div class="t" style="left:435.8px;top:586.8px;transform:scaleX(0.972);transform-origin:0 50%;-webkit-text-stroke:0.4px #000;">PRN</div>
<div class="a" style="left:518px;top:585px;width:14px;height:20px;background:#c0c0c0;border:1px solid #000;box-shadow:inset 1px 1px 0 #fff, inset -1px -1px 0 #808080;"></div>
<svg style="left:522px;top:589.5px" width="7" height="11" viewBox="0 0 7 11"><path d="M0 0L6.5 5.5L0 11Z" fill="#000"/></svg>
<div class="in" style="left:434px;top:609px;width:83px;height:19px;"></div>
<div class="t" style="left:435.8px;top:610.8px;transform:scaleX(0.894);transform-origin:0 50%;-webkit-text-stroke:0.4px #000;">M</div>
<div class="a" style="left:518px;top:609px;width:14px;height:20px;background:#c0c0c0;border:1px solid #000;box-shadow:inset 1px 1px 0 #fff, inset -1px -1px 0 #808080;"></div>
<svg style="left:522px;top:613.5px" width="7" height="11" viewBox="0 0 7 11"><path d="M0 0L6.5 5.5L0 11Z" fill="#000"/></svg>
<div class="in" style="left:434px;top:633px;width:83px;height:19px;"></div>
<div class="t" style="left:435.8px;top:634.8px;transform:scaleX(0.964);transform-origin:0 50%;-webkit-text-stroke:0.4px #000;">KNAV</div>
<div class="a" style="left:518px;top:633px;width:14px;height:20px;background:#c0c0c0;border:1px solid #000;box-shadow:inset 1px 1px 0 #fff, inset -1px -1px 0 #808080;"></div>
<svg style="left:522px;top:637.5px" width="7" height="11" viewBox="0 0 7 11"><path d="M0 0L6.5 5.5L0 11Z" fill="#000"/></svg>
<div class="in" style="left:434px;top:658px;width:83px;height:19px;"></div>
<div class="t" style="left:435.8px;top:659.8px;transform:scaleX(0.873);transform-origin:0 50%;-webkit-text-stroke:0.4px #000;">N</div>
<div class="a" style="left:518px;top:658px;width:14px;height:20px;background:#c0c0c0;border:1px solid #000;box-shadow:inset 1px 1px 0 #fff, inset -1px -1px 0 #808080;"></div>
<svg style="left:522px;top:662.5px" width="7" height="11" viewBox="0 0 7 11"><path d="M0 0L6.5 5.5L0 11Z" fill="#000"/></svg>
<div class="in" style="left:434px;top:682px;width:83px;height:19px;"></div>
<div class="a" style="left:518px;top:682px;width:16px;height:20px;background:#c0c0c0;border:1px solid #000;box-shadow:inset 1px 1px 0 #fff, inset -1px -1px 0 #808080;"></div>
<div class="a" style="left:522px;top:692px;width:2px;height:2px;background:#000"></div>
<div class="a" style="left:525px;top:692px;width:2px;height:2px;background:#000"></div>
<div class="a" style="left:528px;top:692px;width:2px;height:2px;background:#000"></div>
<div class="in ro" style="left:434px;top:706px;width:309px;height:19px;"></div>
<div class="a" style="left:744px;top:707px;width:13px;height:18px;background:#c0c0c0;border:1px solid #000;box-shadow:inset 1px 1px 0 #fff, inset -1px -1px 0 #808080;"></div>
<svg style="left:748px;top:710px" width="8" height="14" viewBox="0 0 8 14"><rect x="0.5" y="0.5" width="7" height="8" fill="#fff" stroke="#000"/><path d="M2 2.5H6M2 4.5H6M2 6.5H6" stroke="#00f" stroke-width="1"/><path d="M0.5 10H7.5L4 13.8Z" fill="#000"/></svg>
<div class="in ro" style="left:434px;top:732px;width:97px;height:21px;"></div>
<div class="t" style="left:436px;top:734.3px;color:#a8a494;transform:scaleX(1.051);transform-origin:0 50%;-webkit-text-stroke:0.4px #a8a494;">Žádný</div>
<div class="a" style="left:513px;top:734px;width:16px;height:17px;border:1px solid;border-color:#fff #aca899 #aca899 #fff;"><svg style="left:4px;top:6px" width="7" height="4" viewBox="0 0 7 4"><path d="M0 0H7L3.5 4Z" fill="#aca899"/></svg></div>
<div class="in" style="left:434px;top:755px;width:309px;height:19px;"></div>
<div class="a" style="left:744px;top:756px;width:13px;height:18px;background:#c0c0c0;border:1px solid #000;box-shadow:inset 1px 1px 0 #fff, inset -1px -1px 0 #808080;"></div>
<svg style="left:748px;top:759px" width="8" height="14" viewBox="0 0 8 14"><rect x="0.5" y="0.5" width="7" height="8" fill="#fff" stroke="#000"/><path d="M2 2.5H6M2 4.5H6M2 6.5H6" stroke="#00f" stroke-width="1"/><path d="M0.5 10H7.5L4 13.8Z" fill="#000"/></svg>
<div class="in" style="left:659px;top:463px;width:83px;height:19px;"></div>
<div class="a" style="left:743px;top:463px;width:14px;height:20px;background:#c0c0c0;border:1px solid #000;box-shadow:inset 1px 1px 0 #fff, inset -1px -1px 0 #808080;"></div>
<svg style="left:747px;top:467.5px" width="7" height="11" viewBox="0 0 7 11"><path d="M0 0L6.5 5.5L0 11Z" fill="#000"/></svg>
<div class="a" style="left:662px;top:465px;width:16px;height:15px;background:#316ac5"></div>
<div class="t" style="left:662px;top:464.8px;color:#fff;transform:scaleX(0.864);transform-origin:0 50%;-webkit-text-stroke:0.3px #fff;">SV</div>
<div class="in" style="left:659px;top:487px;width:98px;height:19px;"></div>
<div class="t" style="left:660.8px;top:488.8px;transform:scaleX(1.096);transform-origin:0 50%;-webkit-text-stroke:0.4px #000;">KNAVM2011/4</div>
<div class="in" style="left:659px;top:536px;width:98px;height:19px;"></div>
<div class="in" style="left:659px;top:560px;width:83px;height:19px;"></div>
<div class="t" style="left:660.8px;top:561.8px;transform:scaleX(0.962);transform-origin:0 50%;-webkit-text-stroke:0.4px #000;">MON</div>
<div class="a" style="left:743px;top:560px;width:14px;height:20px;background:#c0c0c0;border:1px solid #000;box-shadow:inset 1px 1px 0 #fff, inset -1px -1px 0 #808080;"></div>
<svg style="left:747px;top:564.5px" width="7" height="11" viewBox="0 0 7 11"><path d="M0 0L6.5 5.5L0 11Z" fill="#000"/></svg>
<div class="in ro" style="left:659px;top:585px;width:98px;height:19px;"></div>
<div class="t" style="left:660.8px;top:586.8px;transform:scaleX(1.211);transform-origin:0 50%;-webkit-text-stroke:0.4px #000;">05/12/2011</div>
<div class="in ro" style="left:659px;top:731px;width:84px;height:19px;"></div>
<div class="a" style="left:743px;top:732px;width:16px;height:20px;background:#c0c0c0;border:1px solid #000;box-shadow:inset 1px 1px 0 #fff, inset -1px -1px 0 #808080;"></div>
<div class="a" style="left:747px;top:742px;width:2px;height:2px;background:#000"></div>
<div class="a" style="left:750px;top:742px;width:2px;height:2px;background:#000"></div>
<div class="a" style="left:753px;top:742px;width:2px;height:2px;background:#000"></div>
<div class="a" style="left:546px;top:637px;width:12px;height:12px;background:#fff;border:1px solid;border-color:#9a988a #fff #fff #9a988a;box-shadow:inset 1px 1px 0 #d0cec0;"></div>
<svg style="left:548.5px;top:639.5px" width="8" height="8" viewBox="0 0 8 8"><path d="M0.5 3L3 5.5L7.5 0.5" stroke="#000" stroke-width="1.8" fill="none"/></svg>
<div class="t" style="left:564px;top:634.5px;font-weight:bold;transform:scaleX(0.996);transform-origin:0 50%;">Status dodání "Úplné"</div>
<div class="a" style="left:1348px;top:463px;width:75px;height:23px;border:1px solid #000;"></div>
<div class="btn" style="left:1349px;top:464px;width:73px;height:21px;"></div>
<div class="t" style="left:1358.5px;top:465.5px;font-weight:bold;color:#aca899;transform:scaleX(0.991);transform-origin:0 50%;text-shadow:1px 1px 0 #fff;">Aktualiz.</div>
<div class="btn" style="left:1348px;top:489px;width:75px;height:23px;"></div>
<div class="t" style="left:1351.5px;top:491.5px;font-weight:bold;transform:scaleX(0.980);transform-origin:0 50%;"><u>U</u>ložit impl.</div>
<div class="btn" style="left:1348px;top:515px;width:75px;height:23px;"></div>
<div class="t" style="left:1360.5px;top:517.5px;font-weight:bold;transform:scaleX(0.997);transform-origin:0 50%;">O<u>b</u>novit</div>
<div class="btn" style="left:1348px;top:541px;width:75px;height:23px;"></div>
<div class="t" style="left:1364px;top:543.5px;font-weight:bold;color:#aca899;transform:scaleX(1.002);transform-origin:0 50%;text-shadow:1px 1px 0 #fff;"><u>S</u>torno</div>
<div class="a" style="left:0px;top:816px;width:299px;height:1px;background:#000"></div>
<div class="a" style="left:0px;top:815px;width:299px;height:1px;background:#716f64"></div>
<div class="a" style="left:0px;top:819px;width:24px;height:16px;border-top:1px solid #aca899;border-left:1px solid #aca899;border-right:1px solid #fff;"></div>
<svg style="left:6px;top:820px" width="13" height="13" viewBox="0 0 15 15"><path d="M7.5 0.5L14.5 7.5L7.5 14.5L0.5 7.5Z" fill="#1fe01f" stroke="#18b418" stroke-width="0.8"/></svg>
<div class="a" style="left:26px;top:819px;width:53px;height:16px;background:#c0c0c0;border-top:1px solid #aca899;border-left:1px solid #aca899;border-right:1px solid #fff;"></div>
<svg style="left:29px;top:820px" width="20" height="15" viewBox="0 0 20 15"><path d="M12 13L19 9L14 13Z" fill="#9a9a9a"/><path d="M1 4.5L4.5 1H12.5V10.5L9 14H1Z" fill="#ececec" stroke="#000" stroke-width="1.05" stroke-linejoin="round"/><path d="M9 4.5V14L12.5 10.5V1Z" fill="#b0b0b0" stroke="#000" stroke-width="0.8"/><path d="M1 4.5H9L12.5 1" fill="none" stroke="#fff" stroke-width="0.8"/><path d="M3 8H5M3 11H5" stroke="#808080" stroke-width="1"/></svg>
<svg style="left:59px;top:820px" width="20" height="15" viewBox="0 0 20 15"><path d="M12 13L19 9L14 13Z" fill="#9a9a9a"/><path d="M1 4.5L4.5 1H12.5V10.5L9 14H1Z" fill="#ececec" stroke="#000" stroke-width="1.05" stroke-linejoin="round"/><path d="M9 4.5V14L12.5 10.5V1Z" fill="#b0b0b0" stroke="#000" stroke-width="0.8"/><path d="M1 4.5H9L12.5 1" fill="none" stroke="#fff" stroke-width="0.8"/><path d="M3 8H5M3 11H5" stroke="#808080" stroke-width="1"/></svg>
<div class="a" style="left:82px;top:819px;width:1082px;height:16px;border-top:1px solid #aca899;border-left:1px solid #aca899;border-right:1px solid #fff;"></div>
<div class="a" style="left:1171px;top:819px;width:16px;height:16px;background:linear-gradient(to bottom,#c8d8f8,#a4bef0);border:1px solid #8aa6e0;border-bottom:none;"></div>
<div class="a" style="left:1197px;top:819px;width:16px;height:16px;background:linear-gradient(to bottom,#c8d8f8,#a4bef0);border:1px solid #8aa6e0;border-bottom:none;"></div>
<div class="a" style="left:1223px;top:819px;width:16px;height:16px;background:linear-gradient(to bottom,#c8d8f8,#a4bef0);border:1px solid #8aa6e0;border-bottom:none;"></div>
<div class="a" style="left:1249px;top:819px;width:16px;height:16px;background:linear-gradient(to bottom,#c8d8f8,#a4bef0);border:1px solid #8aa6e0;border-bottom:none;"></div>
<div class="a" style="left:1275px;top:819px;width:16px;height:16px;background:linear-gradient(to bottom,#c8d8f8,#a4bef0);border:1px solid #8aa6e0;border-bottom:none;"></div>
<svg style="left:1171px;top:819px" width="16" height="16" viewBox="0 0 16 16"><path d="M8 3L10.6 6H5.4Z M8 14L10.6 11H5.4Z M2.5 8.5L5.5 6V11Z M13.5 8.5L10.5 6V11Z" fill="#0c2a78"/></svg>
<div class="t" style="left:1195.5px;top:822.5px;font-size:7px;font-weight:bold;color:#0c2a78;line-height:8px;height:8px;transform:rotate(-45deg);transform-origin:50% 50%;">MARC</div>
<svg style="left:1223px;top:819px" width="16" height="16" viewBox="0 0 16 16"><path d="M2 11L6 7V9.5L8.5 7.5V12L6 12.5V15Z" fill="#0c2a78"/><path d="M14 5.5L10 1.5V4L7.5 6V10.5L10 8V9.5Z" fill="#0c2a78"/></svg>
<svg style="left:1249px;top:819px" width="16" height="16" viewBox="0 0 16 16"><circle cx="8" cy="8.5" r="6.3" fill="#2458b8"/><path d="M4 4.5C6 3 8.5 4 7.5 6C6.5 8 4.5 7.5 5 10.5C3.5 9.5 2.5 6.5 4 4.5Z M9 7.5C11 6.5 13.5 8 12.5 10.5C12 12.5 10 13.5 9.5 12C9 10.5 8 9 9 7.5Z M9.5 3.2L12 4.5L10.5 5.5Z" fill="#7cb4ec"/></svg>
<svg style="left:1275px;top:819px" width="16" height="16" viewBox="0 0 16 16"><rect x="2" y="2.5" width="12" height="13" fill="#fff" stroke="#3a5aa8"/><rect x="2" y="2.5" width="12" height="2.5" fill="#3a5aa8"/><path d="M5 5V15M8 5V15M11 5V15M2 8H14M2 10.5H14M2 13H14" stroke="#6a8ad0" stroke-width="1"/></svg>
<div class="a" style="left:1298px;top:819px;width:4px;height:16px;background:#fff;border-right:1px solid #aca899;"></div>
<svg style="left:1310px;top:819px" width="13" height="16" viewBox="0 0 13 16"><circle cx="8" cy="3.3" r="2.4" fill="none" stroke="#e89a1c" stroke-width="1.9"/><path d="M7.6 5.8L6.6 16" stroke="#e89a1c" stroke-width="2.2" fill="none"/><path d="M6.8 12.5H3.5M6.6 15H4" stroke="#a86a08" stroke-width="1.6" fill="none"/><path d="M8.6 6L7.8 16" stroke="#6a4200" stroke-width="0.7"/></svg>
<svg style="left:1336px;top:819px" width="14" height="16" viewBox="0 0 14 16"><rect x="4" y="0.5" width="5.5" height="4.5" fill="#d4be78" stroke="#5a4a1a" stroke-width="0.9"/><rect x="3" y="5" width="7.5" height="5" fill="#c8b068" stroke="#5a4a1a" stroke-width="0.9"/><rect x="1.5" y="10" width="10.5" height="5.5" fill="#bca458" stroke="#5a4a1a" stroke-width="0.9"/><path d="M5.5 2.8H8M5 7.5H8.5M4.5 12.8H9" stroke="#5a4a1a" stroke-width="1"/></svg>
<svg style="left:1361px;top:819px" width="17" height="16" viewBox="0 0 17 16"><path d="M8.5 0.5L16.5 6.5H0.5Z" fill="#e89a1c" stroke="#9a6208" stroke-width="0.8"/><rect x="2" y="7" width="13" height="9" fill="#f4ead0"/><path d="M3.2 7V16M8.5 7V16M13.8 7V16" stroke="#e89a1c" stroke-width="2.4"/><path d="M4.7 7V16M10 7V16M15.2 7V16" stroke="#8a5a08" stroke-width="0.7"/></svg>
<div class="a" style="left:1383px;top:819px;width:30px;height:16px;border-top:1px solid #c8c5b2;border-left:1px solid #c8c5b2;border-right:1px solid #fff;"></div>
<svg style="left:1389px;top:819px" width="18" height="16" viewBox="0 0 18 16"><path d="M5 5.5L7 1H14L12.5 5.5" fill="#b8b4f0" stroke="#5a5a8a" stroke-width="0.8"/><path d="M1 7.5Q1 5.5 3 5.5H15Q17 5.5 17 7.5V11.5H1Z" fill="#dcdcf0" stroke="#505060" stroke-width="0.9"/><path d="M2 9H16" stroke="#fff" stroke-width="1"/><rect x="2.5" y="11.5" width="13" height="2.8" fill="#404048"/><path d="M3 15H15" stroke="#808088" stroke-width="1"/></svg>
<div class="a" style="left:1420px;top:819px;width:16px;height:16px;background:#faf9f4;border:1px solid #b8b6a8;border-bottom:none;"></div>
<svg style="left:1421px;top:820px" width="14" height="15" viewBox="0 0 14 15"><path d="M2.5 2.5L11.5 13M11.5 2.5L2.5 13" stroke="#e89a1c" stroke-width="3.4" fill="none"/></svg>
<svg style="left:6px;top:52px" width="12" height="12" viewBox="0 0 12 12"><rect x="0.6" y="0.6" width="10.8" height="3" rx="1.2" fill="#e8e8e8" stroke="#000" stroke-width="1.1"/><rect x="0.6" y="4.4" width="10.8" height="3" rx="1.2" fill="#e8e8e8" stroke="#000" stroke-width="1.1"/><rect x="0.6" y="8.2" width="10.8" height="3" rx="1.2" fill="#e8e8e8" stroke="#000" stroke-width="1.1"/></svg>
<svg style="left:5px;top:77px" width="14" height="13" viewBox="0 0 14 13"><path d="M5 1.5H12V11.5H5V8" fill="#fff" stroke="#000" stroke-width="1.1"/><circle cx="3.8" cy="5.8" r="3" fill="#fff" stroke="#000" stroke-width="1.1"/><path d="M2.8 0.8L4.6 2.6" stroke="#000" stroke-width="1"/></svg>
<svg style="left:6px;top:101px" width="12" height="13" viewBox="0 0 12 13"><path d="M0 4.5L5.5 0.3L12 4.3L8 8L2.5 6.5Z" fill="#fff"/><path d="M5.5 0.5V3.2M1.2 5.5H7.8M11 3.6L6.2 8.8" stroke="#000" stroke-width="1.1" fill="none"/><path d="M2 12.8V10.2L4.5 8.8H8L9.2 10.2V12.8Z" fill="#000"/><path d="M3.2 10.8L4.6 9.9" stroke="#fff" stroke-width="0.9"/></svg>
<svg style="left:1415px;top:51px" width="16" height="15" viewBox="0 0 16 15"><rect x="0.5" y="0.5" width="15" height="14" fill="#f4f2e8" stroke="#b4b2a4"/><path d="M2.5 1V14M4.5 4H14M4.5 7H14M4.5 10H14" stroke="#b4b2a4" stroke-width="1"/></svg>
<svg style="left:1415px;top:75px" width="17" height="16" viewBox="0 0 17 16"><path d="M6 2.5H13V11.5H6" fill="#fff" stroke="#000" stroke-width="1.1"/><path d="M9 9.5H15.5M9 11.5H15.5M6.5 14H15.5V9" stroke="#000" stroke-width="1.1" fill="none"/><circle cx="3.8" cy="6.8" r="3" fill="#fff" stroke="#000" stroke-width="1.1"/><path d="M2.8 2L4.6 3.8" stroke="#000" stroke-width="1"/><path d="M10.5 0.5L15.5 5.5M15.5 0.5L10.5 5.5" stroke="#1414c8" stroke-width="2"/></svg>
<svg style="left:1417px;top:101px" width="16" height="14" viewBox="0 0 16 14"><g transform="translate(0,1) scale(0.85)"><path d="M0 4.5L5.5 0.3L12 4.3L8 8L2.5 6.5Z" fill="#fff"/><path d="M5.5 0.5V3.2M1.2 5.5H7.8M11 3.6L6.2 8.8" stroke="#000" stroke-width="1.1" fill="none"/><path d="M2 12.8V10.2L4.5 8.8H8L9.2 10.2V12.8Z" fill="#000"/><path d="M3.2 10.8L4.6 9.9" stroke="#fff" stroke-width="0.9"/></g><path d="M8.5 0.3L13.5 5.3M13.5 0.3L8.5 5.3" stroke="#1414c8" stroke-width="2"/></svg>
</body>
</html>
